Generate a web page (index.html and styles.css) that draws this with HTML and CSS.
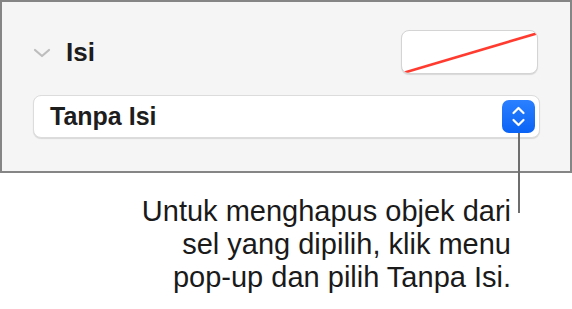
FILE: index.html
```html
<!DOCTYPE html>
<html lang="id">
<head>
    <meta charset="UTF-8">
    <title>Isi</title>
    <link rel="stylesheet" href="styles.css">
</head>
<body>
<div class="panel">
    <div class="header">
        <svg class="disclosure" width="18" height="10" viewBox="0 0 18 10">
            <path d="M2 2 L9 8 L16 2" fill="none" stroke="#bdbdbd" stroke-width="2.2" stroke-linecap="round" stroke-linejoin="round"/>
        </svg>
        <span class="title">Isi</span>
        <div class="swatch">
            <svg width="137" height="43" viewBox="0 0 137 43">
                <line x1="1" y1="42" x2="136" y2="2" stroke="#ff3b30" stroke-width="2.6"/>
            </svg>
        </div>
    </div>
    <div class="popup">
        <span class="popup-label">Tanpa Isi</span>
        <div class="stepper">
            <svg width="33" height="33" viewBox="0 0 33 33">
                <path d="M11.5 13 L16.5 8 L21.5 13" fill="none" stroke="#fff" stroke-width="2.2" stroke-linecap="round" stroke-linejoin="round"/>
                <path d="M11.5 20 L16.5 25 L21.5 20" fill="none" stroke="#fff" stroke-width="2.2" stroke-linecap="round" stroke-linejoin="round"/>
            </svg>
        </div>
    </div>
</div>
<p class="callout">Untuk menghapus objek dari<br>sel yang dipilih, klik menu<br>pop-up dan pilih Tanpa Isi.</p>
</body>
</html>
```

FILE: styles.css
```css
* {
    margin: 0;
    padding: 0;
    box-sizing: border-box;
}
body {
    background: #fff;
    font-family: "Liberation Sans", Arial, sans-serif;
    color: #1d1d1f;
}
.panel {
    width: 572px;
    height: 173px;
    background: #f5f5f5;
    border: 2px solid #858585;
    padding: 28px 0 0 31px;
}
.header {
    display: flex;
    align-items: center;
    width: 507px;
    height: 44px;
}
.disclosure {
    margin-top: 2px;
}
.title {
    margin-left: 15px;
    font-size: 26px;
    font-weight: bold;
    color: #1d1d1d;
}
.swatch {
    margin-left: auto;
    margin-right: 2px;
    width: 137px;
    height: 44px;
    background: #fff;
    border: 1px solid #d4d4d4;
    border-radius: 8px;
    box-shadow: 0 1px 1px rgba(0,0,0,.12);
    overflow: hidden;
}
.swatch svg {
    display: block;
}
.popup {
    position: relative;
    display: flex;
    align-items: center;
    margin-top: 21px;
    width: 507px;
    height: 43px;
    background: #fff;
    border: 1px solid #dcdcdc;
    border-radius: 8px;
    box-shadow: 0 1px 1px rgba(0,0,0,.12);
    padding: 0 4px 0 16px;
}
.popup-label {
    font-size: 25px;
    font-weight: bold;
    color: #1d1d1d;
}
.stepper {
    position: relative;
    margin-left: auto;
    width: 33px;
    height: 33px;
    background: linear-gradient(#2a80ff, #0a63f5);
    border-radius: 7px;
}
.stepper svg {
    display: block;
}
/* leader line to the callout */
.stepper::after {
    content: "";
    position: absolute;
    left: 16px;
    top: 33px;
    width: 2px;
    height: 80px;
    background: #6e6e6e;
}
.callout {
    width: 511px;
    margin-top: 22px;
    text-align: right;
    font-size: 29px;
    line-height: 33px;
    color: #1a1a1a;
}
```
